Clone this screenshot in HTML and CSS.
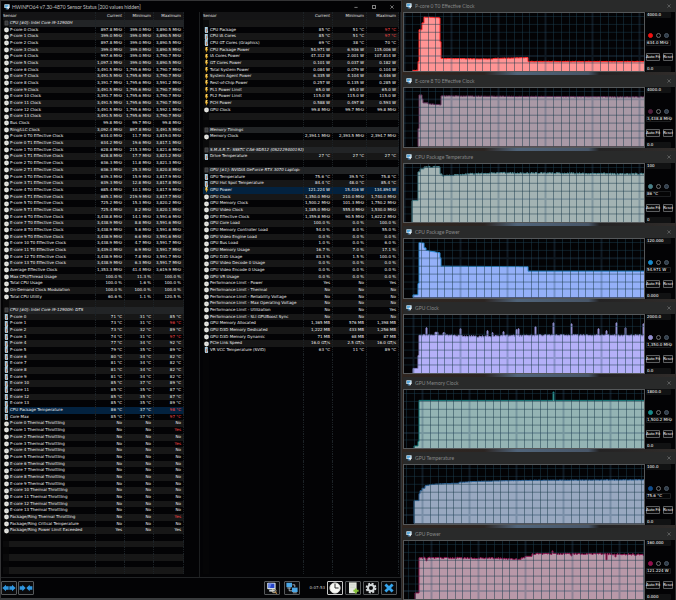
FILE: index.html
```html
<!DOCTYPE html>
<html lang="en">
<head>
<meta charset="utf-8">
<title>HWiNFO64 Sensor Status</title>
<link rel="stylesheet" href="styles.css">
</head>
<body>
<svg class="defs" aria-hidden="true">
  <symbol id="i-dial" viewBox="0 0 10 12"><circle cx="5" cy="6" r="4.8" fill="#e4e4e0"/><path d="M5 3.4V6h2.4" fill="none" stroke="#bbb" stroke-width="1"/></symbol>
  <symbol id="i-temp" viewBox="0 0 10 14"><path d="M1 0h7v9l1 2-1 3H2l-1-3z" fill="#a9cbdf"/><path d="M4 4h2v8H4z" fill="#c87850"/></symbol>
  <symbol id="i-bolt" viewBox="0 0 10 14"><path d="M3 0h5L6.400 5H9L3.400 14 4.600 8H2z" fill="#f2b429"/><path d="M4 1h2L4.600 6H3z" fill="#fff0b0"/></symbol>
  <symbol id="i-chip" viewBox="0 0 10 12"><rect x="1" y="1" width="8" height="10" rx="1" fill="#4c4c4e"/><rect x="3" y="3" width="4" height="6" fill="#38383a"/></symbol>
  <symbol id="i-app" viewBox="0 0 18 18"><rect x="1" y="1" width="16" height="11" rx="1" fill="#d4e4ee"/><rect x="3" y="2.500" width="10" height="8" fill="#58a8dc"/><path d="M9 8h7l-2 8H8z" fill="#e8eef2"/><path d="M5 13h7v3H5z" fill="#3c80b8"/></symbol>
  <symbol id="i-x" viewBox="0 0 10 10"><path d="M1 1l8 8M9 1L1 9" stroke="currentColor" stroke-width="1.4"/></symbol>
</svg>
<main class="desktop">
  <section class="sensors">
    <header class="titlebar">
      <svg class="app-icon"><use href="#i-app"/></svg>
      <h1>HWiNFO64 v7.30-4870 Sensor Status [200 values hidden]</h1>
      <div class="controls">
        <button aria-label="Minimize"><svg viewBox="0 0 10 10"><path d="M1 6h8" stroke="currentColor" stroke-width="1.5"/></svg></button>
        <button aria-label="Maximize"><svg viewBox="0 0 10 10"><path d="M1 1h8v8H1z" fill="none" stroke="currentColor" stroke-width="1.8"/></svg></button>
        <button aria-label="Close"><svg><use href="#i-x"/></svg></button>
      </div>
    </header>
    <div class="lists">
      <div class="pane pane-left"><table id="left"></table></div>
      <div class="pane pane-right"><table id="right"></table></div>
    </div>
    <footer class="toolbar">
      <button aria-label="Expand columns"><svg class="wide" viewBox="0 0 40 24"><path d="M0 12L11 2v5h8v10h-8v5zM40 12L29 2v5h-8v10h8v5z" fill="#2f96e0"/></svg></button>
      <button aria-label="Shrink columns"><svg class="wide" viewBox="0 0 40 24"><path d="M19 12L9 2v5H1v10h8v5zM21 12L31 2v5h8v10h-8v5z" fill="#2f96e0"/></svg></button>
      <div class="tools">
        <button aria-label="Sensor settings"><svg viewBox="0 0 30 30"><rect x="3" y="2" width="21" height="16" rx="2" fill="#d8e4ee"/><rect x="6" y="4" width="15" height="11" fill="#2644c8"/><path d="M6 4h8l-4 11H6z" fill="#6884e8"/><path d="M8 19h14v5H8z" fill="#c4ccd4"/><circle cx="20" cy="22" r="5" fill="none" stroke="#e0d4b0" stroke-width="2"/><path d="M23 25l4 4" stroke="#c08a48" stroke-width="3"/></svg></button>
        <button aria-label="Remote sensors"><svg viewBox="0 0 30 30"><rect x="1" y="2" width="14" height="11" fill="#4ba8e8"/><rect x="15" y="14" width="14" height="11" fill="#4ba8e8"/><path d="M3 15h10M17 27h10M8 14v8h7M22 13V7h-6" fill="none" stroke="#bcd0dc" stroke-width="2"/></svg></button>
        <time class="elapsed">0:07:53</time>
        <button class="lit" aria-label="Reset clock"><svg viewBox="0 0 30 30"><circle cx="15" cy="15" r="13" fill="#f8f8f4" stroke="#d8d8d4" stroke-width="2"/><path d="M15 4v11h9" fill="none" stroke="#222" stroke-width="2.400"/></svg></button>
        <button aria-label="Log to file"><svg viewBox="0 0 30 30"><path d="M5 1h19v27H5z" fill="#e4e8e0"/><path d="M8 6h13M8 10h13M8 14h13" stroke="#c8ccc4" stroke-width="1.500"/><path d="M22 16v13M16 22h13" stroke="#86c23a" stroke-width="5"/></svg></button>
        <button aria-label="Settings"><svg viewBox="0 0 30 30"><circle cx="15" cy="15" r="11" fill="none" stroke="#d4d8da" stroke-width="5" stroke-dasharray="5 3.640"/><circle cx="15" cy="15" r="7.500" fill="none" stroke="#d4d8da" stroke-width="5"/></svg></button>
        <button aria-label="Close sensors"><svg viewBox="0 0 30 30"><path d="M6 6l18 18M24 6L6 24" stroke="#35a4ec" stroke-width="7"/></svg></button>
      </div>
    </footer>
  </section>
  <section class="graphs" id="graphs"></section>
</main>
<script src="app.js"></script>
</body>
</html>
```
FILE: styles.css
```css
* { box-sizing: border-box; }
body {
  margin: 0;
  background: #1b1a1b;
  color: #f0f0f0;
  font-family: "DejaVu Sans", sans-serif;
  font-size: 4px;
  line-height: 6px;
}
button, input { font: inherit; color: inherit; margin: 0; padding: 0; min-width: 0; }
.defs { position: absolute; width: 0; height: 0; }
.desktop {
  display: grid;
  grid-template-columns: 402fr 274fr;
  min-height: 100vh;
}
.sensors {
  display: flex;
  flex-direction: column;
  background: #030305;
  border: 1px solid #343436;
  border-bottom: 2px solid #3a3c3e;
}
.titlebar {
  display: flex;
  align-items: center;
  gap: 2px;
  height: 11px;
  padding-left: 3px;
  flex: none;
}
.app-icon { width: 6px; height: 6px; flex: none; }
h1, h2 {
  margin: 0;
  font: 400 5px/8px Lato, sans-serif;
  white-space: nowrap;
}
h1 { color: #c0c0c0; }
.controls { display: flex; gap: 14px; margin-left: auto; padding-right: 7px; }
.controls button, .close {
  display: flex;
  width: 4px;
  height: 4px;
  border: 0;
  background: none;
  color: #c8c8c8;
}
.controls svg, .close svg { width: 4px; height: 4px; }
.lists {
  flex: 1;
  display: grid;
  grid-template-columns: 199fr 201fr;
}
.pane { padding-bottom: 3px; border-right: 1px solid #1c1e20; }
.pane-left { padding-left: 2px; padding-right: 15px; }
.pane-right { padding-left: 3px; padding-right: 1px; }
table { display: flex; flex-direction: column; height: 100%; }
tbody { flex: 1; display: grid; grid-auto-rows: 1fr; }
tr { display: grid; align-items: stretch; }
.pane-left tr { grid-template-columns: 6fr 87fr 29fr 29fr 30fr; }
.pane-right tr { grid-template-columns: 6fr 95fr 29fr 34fr 32fr; }
thead tr { height: 8px; background: #141416; }
th, td {
  padding: 0 2px 0 0;
  font-weight: 400;
  text-align: right;
  white-space: nowrap;
  min-width: 0;
  border-right: 1px dotted #1c2226;
}
thead th { line-height: 7px; color: #e0e0e0; }
th:first-child { grid-column: 1 / 3; }
thead th:first-child, td.name { text-align: left; }
td.name { padding-left: 1px; }
td.icon { display: flex; align-items: center; justify-content: center; padding: 0; border: 0; background: #050506; }
td.icon svg { width: 5px; height: 6px; }
tr.stripe td { background-color: #171717; }
tr.stripe td.icon { background-color: #0a0a0b; }
tr.group td { background-color: #222426; font-style: italic; }
tr.group td.icon { background-color: #0a0a0b; }
tr.selected td { background-color: #03223f; }
td.hot { color: #ff4848; }
.toolbar {
  display: flex;
  align-items: center;
  gap: 1px;
  height: 20px;
  margin-bottom: 1px;
  border-top: 1px solid #222426;
  flex: none;
}
.toolbar button {
  display: flex;
  align-items: center;
  justify-content: center;
  width: 16px;
  height: 14px;
  border: 1px solid #55585a;
  border-radius: 1px;
  background: #0a0a0c;
}
.toolbar svg { width: 12px; height: 12px; }
.toolbar .wide { width: 14px; height: 8px; flex: none; }
.tools { display: flex; align-items: center; gap: 2px; margin-left: auto; padding-right: 4px; }
.tools button:first-child { margin-right: 2px; }
.tools .lit { border-color: #c8c8c8; }
.elapsed { margin-left: 8px; color: #c8c8c8; }
.graphs {
  display: grid;
  grid-auto-rows: 1fr;
  gap: 3px;
  padding-left: 1px;
  background: linear-gradient(90deg, #302620, #2c2522 30%, #50647a 42%, #485668 68%, #242324 72%, #302c2a);
}
.graph {
  display: flex;
  flex-direction: column;
  min-height: 0;
  background: #030305;
  border-right: 1px solid #2a2a2c;
}
.graph header {
  display: flex;
  align-items: center;
  gap: 3px;
  height: 12px;
  padding: 0 4px 0 3px;
  background: #292a2a;
  color: #858787;
  flex: none;
}
.close { margin-left: auto; color: #808282; }
.body { flex: 1; display: flex; min-height: 0; }
.plot {
  flex: 1;
  min-width: 0;
  border: 1px solid #55585a;
  display: flex;
  flex-direction: column;
}
.plot svg { flex: 1 1 0; width: 100%; height: 0; min-height: 0; }
.side {
  display: flex;
  flex-direction: column;
  width: 30px;
  padding: 0 2px 0 1px;
}
.side input, .side output {
  display: block;
  width: 25px;
  height: 6px;
  padding-left: 1px;
  border: 0;
  border-radius: 1px;
  background: #111213;
  color: #fff;
  white-space: nowrap;
}
.side output {
  margin: 2px 0 7px;
  box-shadow: inset 0 0 0 1px #1c1e20;
  background: #050506;
}
.dots { display: flex; gap: 3px; padding: 0 2px; margin-top: auto; }
.dots button { width: 5px; height: 5px; border: 1px solid #707274; border-radius: 50%; background: #050506; }
.dots .line { background: var(--line); border-color: var(--line); }
.dots .grid { background: #2c3a48; border-color: #4c5864; }
.acts { display: flex; justify-content: space-between; margin-bottom: 5px; }
.acts button {
  height: 8px;
  border: 0;
  border-radius: 1px;
  background: #0c0c0d;
  box-shadow: inset 0 0 0 1px #5c5e60;
  font-family: Lato, sans-serif;
  white-space: nowrap;
}
```
FILE: app.js
```js
const ROWS = 83;

// Each row: icon | name | current | minimum | maximum. '#' opens a group, '*' marks the selected row.
const left = `#|CPU [#0]: Intel Core i9-12900H
d|P-core 0 Clock|897.8 MHz|399.0 MHz|3,890.5 MHz
d|P-core 1 Clock|399.0 MHz|399.0 MHz|3,890.5 MHz
d|P-core 2 Clock|897.8 MHz|399.0 MHz|3,890.5 MHz
d|P-core 3 Clock|399.0 MHz|399.0 MHz|3,890.5 MHz
d|P-core 4 Clock|997.6 MHz|399.0 MHz|3,790.7 MHz
d|P-core 5 Clock|1,097.3 MHz|399.0 MHz|3,890.5 MHz
d|E-core 6 Clock|3,491.5 MHz|1,795.6 MHz|3,790.7 MHz
d|E-core 7 Clock|3,491.5 MHz|1,795.6 MHz|3,790.7 MHz
d|E-core 8 Clock|3,391.7 MHz|1,795.6 MHz|3,591.2 MHz
d|E-core 9 Clock|3,491.5 MHz|1,795.6 MHz|3,790.7 MHz
d|E-core 10 Clock|3,391.7 MHz|1,795.6 MHz|3,790.7 MHz
d|E-core 11 Clock|3,491.5 MHz|1,795.6 MHz|3,790.7 MHz
d|E-core 12 Clock|3,491.5 MHz|1,795.6 MHz|3,592.1 MHz
d|E-core 13 Clock|3,491.5 MHz|1,795.6 MHz|3,790.7 MHz
d|Bus Clock|99.8 MHz|99.7 MHz|99.8 MHz
d|Ring/LLC Clock|3,092.4 MHz|897.8 MHz|3,491.5 MHz
d|P-core 0 T0 Effective Clock|634.0 MHz|11.7 MHz|3,819.0 MHz
d|P-core 0 T1 Effective Clock|634.2 MHz|19.6 MHz|3,817.1 MHz
d|P-core 1 T0 Effective Clock|628.8 MHz|215.3 MHz|3,821.6 MHz
d|P-core 1 T1 Effective Clock|628.8 MHz|17.7 MHz|3,821.2 MHz
d|P-core 2 T0 Effective Clock|636.3 MHz|11.8 MHz|3,821.3 MHz
d|P-core 2 T1 Effective Clock|636.3 MHz|25.3 MHz|3,820.8 MHz
d|P-core 3 T0 Effective Clock|639.3 MHz|15.9 MHz|3,817.9 MHz
d|P-core 3 T1 Effective Clock|639.3 MHz|12.8 MHz|3,817.8 MHz
d|P-core 4 T0 Effective Clock|685.4 MHz|10.1 MHz|3,817.9 MHz
d|P-core 4 T1 Effective Clock|685.1 MHz|219.9 MHz|3,817.7 MHz
d|P-core 5 T0 Effective Clock|725.2 MHz|15.3 MHz|3,820.2 MHz
d|P-core 5 T1 Effective Clock|725.4 MHz|8.2 MHz|3,820.1 MHz
d|E-core 6 T0 Effective Clock|3,438.8 MHz|14.1 MHz|3,591.6 MHz
d|E-core 7 T0 Effective Clock|3,438.9 MHz|8.8 MHz|3,591.6 MHz
d|E-core 8 T0 Effective Clock|3,438.9 MHz|5.6 MHz|3,591.6 MHz
d|E-core 9 T0 Effective Clock|3,438.9 MHz|6.6 MHz|3,591.6 MHz
d|E-core 10 T0 Effective Clock|3,438.9 MHz|4.7 MHz|3,591.7 MHz
d|E-core 11 T0 Effective Clock|3,439.0 MHz|6.9 MHz|3,591.7 MHz
d|E-core 12 T0 Effective Clock|3,438.9 MHz|7.8 MHz|3,591.7 MHz
d|E-core 13 T0 Effective Clock|3,438.9 MHz|6.3 MHz|3,591.7 MHz
d|Average Effective Clock|1,353.3 MHz|41.4 MHz|3,619.9 MHz
d|Max CPU/Thread Usage|100.0 %|11.3 %|100.0 %
d|Total CPU Usage|100.0 %|1.6 %|100.0 %
d|On-Demand Clock Modulation|100.0 %|100.0 %|100.0 %
d|Total CPU Utility|60.6 %|1.1 %|120.5 %

#|CPU [#0]: Intel Core i9-12900H: DTS
t|P-core 0|71 °C|31 °C|85 °C
t|P-core 1|73 °C|31 °C|96 °C!
t|P-core 2|73 °C|32 °C|89 °C
t|P-core 3|74 °C|31 °C|97 °C!
t|P-core 4|77 °C|34 °C|92 °C
t|P-core 5|79 °C|35 °C|89 °C
t|E-core 6|80 °C|34 °C|82 °C
t|E-core 7|81 °C|34 °C|82 °C
t|E-core 8|81 °C|34 °C|82 °C
t|E-core 9|81 °C|34 °C|82 °C
t|E-core 10|85 °C|37 °C|89 °C
t|E-core 11|85 °C|35 °C|87 °C
t|E-core 12|85 °C|35 °C|87 °C
t|E-core 13|85 °C|35 °C|89 °C
*t|CPU Package Temperature|86 °C|37 °C|98 °C!
t|Core Max|85 °C|37 °C|97 °C!
d|P-core 0 Thermal Throttling|No|No|No
d|P-core 1 Thermal Throttling|No|No|Yes!
d|P-core 2 Thermal Throttling|No|No|No
d|P-core 3 Thermal Throttling|No|No|Yes!
d|P-core 4 Thermal Throttling|No|No|No
d|P-core 5 Thermal Throttling|No|No|No
d|E-core 6 Thermal Throttling|No|No|No
d|E-core 7 Thermal Throttling|No|No|No
d|E-core 8 Thermal Throttling|No|No|No
d|E-core 9 Thermal Throttling|No|No|No
d|E-core 10 Thermal Throttling|No|No|No
d|E-core 11 Thermal Throttling|No|No|No
d|E-core 12 Thermal Throttling|No|No|No
d|E-core 13 Thermal Throttling|No|No|No
d|Package/Ring Thermal Throttling|No|No|Yes!
d|Package/Ring Critical Temperature|No|No|No
d|Package/Ring Power Limit Exceeded|Yes|No|Yes`;

const right = `
t|CPU Package|85 °C|51 °C|97 °C!
t|CPU IA Cores|85 °C|51 °C|97 °C!
t|CPU GT Cores (Graphics)|69 °C|38 °C|70 °C
b|CPU Package Power|54.971 W|6.936 W|115.006 W
b|IA Cores Power|47.312 W|2.001 W|107.814 W
b|GT Cores Power|0.101 W|0.037 W|0.182 W
b|Total System Power|0.084 W|0.079 W|0.104 W
b|System Agent Power|6.335 W|4.104 W|6.446 W
b|Rest-of-Chip Power|0.257 W|0.135 W|0.285 W
b|PL1 Power Limit|65.0 W|65.0 W|65.0 W
b|PL2 Power Limit|115.0 W|115.0 W|115.0 W
b|PCH Power|0.588 W|0.497 W|0.593 W
d|GPU Clock|99.8 MHz|99.7 MHz|99.8 MHz


#|Memory Timings
d|Memory Clock|2,394.1 MHz|2,393.5 MHz|2,394.7 MHz

#|S.M.A.R.T.: SSSTC CA6-8D512 (0S2229400192)
t|Drive Temperature|27 °C|27 °C|27 °C

#|GPU [#1]: NVIDIA GeForce RTX 3070 Laptop:
t|GPU Temperature|75.6 °C|39.5 °C|75.8 °C
t|GPU Hot Spot Temperature|84.4 °C|48.0 °C|85.4 °C
*b|GPU Power|121.224 W|15.416 W|134.894 W
d|GPU Clock|1,350.0 MHz|210.0 MHz|1,740.0 MHz
d|GPU Memory Clock|1,500.2 MHz|101.3 MHz|1,750.2 MHz
d|GPU Video Clock|1,185.0 MHz|555.0 MHz|1,530.0 MHz
d|GPU Effective Clock|1,359.8 MHz|90.5 MHz|1,622.2 MHz
d|GPU Core Load|100.0 %|0.0 %|100.0 %
d|GPU Memory Controller Load|54.0 %|8.0 %|55.0 %
d|GPU Video Engine Load|0.0 %|0.0 %|0.0 %
d|GPU Bus Load|1.0 %|0.0 %|6.0 %
d|GPU Memory Usage|16.7 %|7.0 %|17.1 %
d|GPU D3D Usage|83.3 %|1.5 %|100.0 %
d|GPU Video Decode 0 Usage|0.0 %|0.0 %|0.0 %
d|GPU Video Encode 0 Usage|0.0 %|0.0 %|0.0 %
d|GPU VR Usage|0.0 %|0.0 %|0.0 %
d|Performance Limit - Power|Yes|No|Yes
d|Performance Limit - Thermal|No|No|No
d|Performance Limit - Reliability Voltage|No|No|No
d|Performance Limit - Max Operating Voltage|No|No|No
d|Performance Limit - Utilization|No|No|Yes
d|Performance Limit - SLI GPUBoost Sync|No|No|No
d|GPU Memory Allocated|1,365 MB|576 MB|1,398 MB
d|GPU D3D Memory Dedicated|1,222 MB|433 MB|1,256 MB
d|GPU D3D Memory Dynamic|71 MB|68 MB|87 MB
d|PCIe Link Speed|16.0 GT/s|2.5 GT/s|16.0 GT/s
t|VR VCC Temperature (SVID)|63 °C|11 °C|89 °C`;

const icons = { d: 'dial', t: 'temp', b: 'bolt', '#': 'chip' };

function fill(id, text, stripeUntil) {
  const lines = text.split('\n');
  let html = '<thead><tr><th>Sensor</th><th>Current</th><th>Minimum</th><th>Maximum</th></tr></thead><tbody>';
  for (let i = 0; i < ROWS; i++) {
    let line = lines[i] || '';
    const cls = [];
    if (i % 2 === 0 && i < stripeUntil) cls.push('stripe');
    if (line[0] === '*') { cls.push('selected'); line = line.slice(1); }
    if (line[0] === '#') cls.push('group');
    const bar = line.indexOf('|');
    const icon = icons[line.slice(0, bar)];
    const cells = bar < 0 ? [] : line.slice(bar + 1).split('|');
    html += `<tr class="${cls.join(' ')}"><td class="icon">${icon ? `<svg><use href="#i-${icon}"/></svg>` : ''}</td>`;
    html += `<td class="name">${cells[0] || ''}</td>`;
    for (let c = 1; c < 4; c++) {
      const v = cells[c] || '';
      html += v.endsWith('!') ? `<td class="hot">${v.slice(0, -1)}</td>` : `<td>${v}</td>`;
    }
    html += '</tr>';
  }
  document.getElementById(id).innerHTML = html + '</tbody>';
}
fill('left', left, ROWS);
fill('right', right, 50);

// Plot space is 240 x 59; bx is the first heavy vertical line, by the index of the heavy horizontal one.
const graphs = [
  { t: 'P-core 0 T0 Effective Clock', max: '4000.0', min: '0.0', v: '634.0 MHz', fill: '#ff9494', line: '#ff2a2a', dot: '#f01010', bx: 47, by: 5, j: .4,
    p: [[8,58],[14,58],[14,49],[15,49],[15,17],[18,17],[18,10],[20,9],[20,4],[35,5],[36,29],[37,46],[87,46.5],[89,46],[123,45],[124,49],[240,49]] },
  { t: 'E-core 8 T0 Effective Clock', max: '4000.0', min: '0.0', v: '3,438.8 MHz', fill: '#a999a6', line: '#5c2c54', dot: '#50203c', bx: 47, by: 1, j: .4,
    p: [[14,59],[14,41],[15,41],[15,7],[17,7],[18,11],[19,15],[24,16],[36,17],[37,8],[120,8.5],[240,9]] },
  { t: 'CPU Package Temperature', max: '100', min: '0', v: '86 °C', fill: '#a3b3b3', line: '#4c848c', dot: '#4a8088', bx: 47, by: 4, j: 1.2,
    p: [[8,59],[8,37],[13,37],[14,8],[16,5],[20,3],[35,3],[36,10],[38,12],[48,11.5],[65,10],[95,9],[240,10]] },
  { t: 'CPU Package Power', max: '120.000', min: '0.000', v: '54.971 W', fill: '#94b0f8', line: '#2f8fd8', dot: '#1888c8', bx: 56, by: 2, j: 0,
    p: [[9,59],[9,56.5],[13,56.5],[14,45],[15,18],[15,3.5],[18,4],[20,9],[22,11.5],[35,14],[36,19],[37,27.5],[123,28],[124,32.5],[240,32.5]] },
  { t: 'GPU Clock', max: '2000.0', min: '0.0', v: '1,350.0 MHz', fill: '#b4b0f8', line: '#8c88c8', dot: '#9490d0', bx: 56, by: 5, j: 1.6,
    p: [[9,59],[9,54],[13,54],[14,41],[15,20.5],[28,20.5],[31,17.5],[34,20.5],[39,18],[41,20.5],[72,22],[120,20.5],[240,20.5]],
    s: [[22,13],[39,15],[56,14],[83,16],[88,18],[99,17],[112,15],[114,14],[131,12],[149,8],[167,9],[194,14],[202,16],[212,8],[221,13],[239,9]] },
  { t: 'GPU Memory Clock', max: '1800.0', min: '0.0', v: '1,500.2 MHz', fill: '#94b4b4', line: '#127c7c', dot: '#188888', bx: 18, by: 5, j: 0,
    p: [[10,59],[10,56.5],[14,56.5],[14,52],[15,52],[15,10.5],[240,10.5]], s: [[149,2]] },
  { t: 'GPU Temperature', max: '100.0', min: '0.0', v: '75.6 °C', fill: '#98a8c0', line: '#2c6498', dot: '#104c8c', bx: 18, by: 6, j: .3,
    p: [[10,59],[10,36],[14,36],[15,29],[16,26],[18,23.5],[21,21],[28,19.5],[50,18.5],[55,17.5],[75,16.5],[121,15.5],[240,15]] },
  { t: 'GPU Power', max: '160.000', min: '0.000', v: '121.224 W', fill: '#b898a8', line: '#8c1850', dot: '#90104c', bx: 27, by: 6, j: 1.4,
    p: [[11,59],[11,52.5],[14,52.5],[15,17],[100,17.5],[115,18.5],[123,15.5],[128,13],[200,13],[240,14]],
    s: [[22,20],[100,20],[148,10],[167,15],[202,19],[211,16]] }
];

function series(g) {
  const pts = [];
  let n = 7;
  const spikes = new Map(g.s || []);
  for (let i = 0; i < g.p.length; i++) {
    const [x, y] = g.p[i];
    pts.push([x, y]);
    const next = g.p[i + 1];
    if (!next || next[0] - x < 6) continue;
    for (let k = x + 1; k < next[0]; k++) {
      n = (n * 73 + 41) % 101;
      const base = y + (next[1] - y) * (k - x) / (next[0] - x) + (n / 101 - .5) * g.j;
      pts.push([k, spikes.has(k) ? spikes.get(k) : base]);
    }
  }
  return pts.map((p, i) => (i ? `H${p[0]}V` : `M${p[0]} `) + p[1].toFixed(1)).join('');
}

function plot(g) {
  let thin = '', bold = '';
  for (let k = -6; k < 36; k++) {
    const x = Math.round(g.bx + k * 47 / 6) + .5;
    if (x <= 0 || x >= 240) continue;
    if (k % 6 === 0) bold += `M${x} 0V59`; else thin += `M${x} 0V59`;
  }
  for (let k = 0; k < 7; k++) {
    const y = Math.round(3 + k * 7.9) + .5;
    if (k === g.by) bold += `M0 ${y}H240`; else thin += `M0 ${y}H240`;
  }
  const d = series(g);
  return `<svg viewBox="0 0 240 59" preserveAspectRatio="none" role="img" aria-label="${g.t}">
    <path d="${d}V59H${g.p[0][0]}z" fill="${g.fill}"/>
    <path d="${d}" fill="none" stroke="${g.line}"/>
    <path d="${thin}" stroke="#1c3c4c" stroke-opacity=".5" fill="none"/>
    <path d="${bold}" stroke="#30506a" stroke-opacity=".3" stroke-width="2" fill="none"/>
  </svg>`;
}

document.getElementById('graphs').innerHTML = graphs.map(g => `
  <article class="graph">
    <header><svg class="app-icon"><use href="#i-app"/></svg><h2>${g.t}</h2>
      <button class="close" aria-label="Close"><svg><use href="#i-x"/></svg></button></header>
    <div class="body">
      <div class="plot">${plot(g)}</div>
      <div class="side" style="--line:${g.dot}">
        <input aria-label="Maximum" value="${g.max}">
        <div class="dots"><button class="line" aria-label="Line color"></button><button aria-label="Background color"></button><button class="grid" aria-label="Grid color"></button></div>
        <output>${g.v}</output>
        <div class="acts"><button>Auto Fit</button><button>Reset</button></div>
        <input aria-label="Minimum" value="${g.min}">
      </div>
    </div>
  </article>`).join('');
```
